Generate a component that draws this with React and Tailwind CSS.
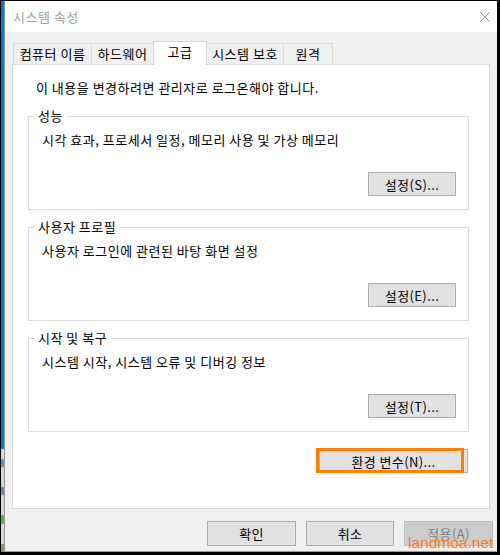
import React from 'react';

const font = { fontFamily: '"Noto Sans CJK KR", "Noto Sans", sans-serif' };

const Btn = ({ children, disabled, className = '' }) => (
  <button
    className={`h-[24px] text-[13px] tracking-[0.4px] leading-none border ${
      disabled
        ? 'bg-[#cccccc] border-[#bfbfbf] text-[#838383]'
        : 'bg-[#e1e1e1] border-[#adadad] text-black'
    } ${className}`}
  >
    {children}
  </button>
);

const Group = ({ title, text, button, className = '' }) => (
  <fieldset className={`ml-[15px] w-[441px] border border-[#dcdcdc] ${className}`}>
    <legend className="ml-[5px] px-[4px] h-[16px] leading-[16px]">{title}</legend>
    <div className="pt-[8px] pl-[13px] pr-[12px] pb-[13px] flex flex-col">
      <p className="h-[16px] leading-[16px]">{text}</p>
      <Btn className="mt-[24px] w-[88px] self-end">{button}</Btn>
    </div>
  </fieldset>
);

const tabs = [
  { label: '컴퓨터 이름', w: 'w-[79px]' },
  { label: '하드웨어', w: 'w-[63px]' },
  { label: '고급', w: 'w-[54px]', active: true },
  { label: '시스템 보호', w: 'w-[78px]' },
  { label: '원격', w: 'w-[50px]' },
];

export default function App() {
  return (
    <div
      className="relative w-[500px] h-[555px] bg-black pt-px pb-[3px] pl-px pr-[3px] flex text-black text-[13px] tracking-[0.5px]"
      style={font}
    >
      {/* desktop strip on the left */}
      <div className="w-[3px] flex flex-col">
        <div className="h-[452px] bg-[#0078d7]"></div>
        <div className="flex-1 bg-[#d8d8d8] flex flex-col gap-[20px] pt-[10px]">
          <div className="h-[8px] bg-[#7d8ea8]"></div>
          <div className="h-[8px] bg-[#6d87b4]"></div>
          <div className="h-[9px] bg-[#3cc43c]"></div>
          <div className="h-[8px] bg-[#a08a6a]"></div>
        </div>
      </div>

      {/* window */}
      <div className="flex-1 flex flex-col border-l border-b border-[#9a9a9a]">
        <div className="h-[31px] bg-white flex items-center justify-between pl-[8px] pr-[6px]">
          <span className="text-[#a0a0a0]">시스템 속성</span>
          <svg width="12" height="12" viewBox="0 0 12 12">
            <path d="M1 1 L11 11 M11 1 L1 11" stroke="#9a9a9a" strokeWidth="1" />
          </svg>
        </div>

        <div className="flex-1 bg-[#f0f0f0] pt-[9px] flex flex-col">
          {/* tabs */}
          <div className="flex items-end ml-[8px]">
            {tabs.map((t, i) => (
              <div
                key={t.label}
                className={`${t.w} ${i > 0 ? '-ml-px' : ''} border border-b-0 border-[#d9d9d9] flex items-center justify-center ${
                  t.active ? 'h-[24px] -mb-px bg-white relative z-10 pb-[3px]' : 'h-[21px] bg-[#f0f0f0]'
                }`}
              >
                {t.label}
              </div>
            ))}
          </div>

          {/* panel */}
          <div className="ml-[7px] w-[478px] h-[445px] bg-white border border-[#d9d9d9] flex flex-col pt-[15px]">
            <p className="ml-[23px] h-[16px] leading-[16px]">
              이 내용을 변경하려면 관리자로 로그온해야 합니다.
            </p>
            <Group className="mt-[12px]" title="성능" text="시각 효과, 프로세서 일정, 메모리 사용 및 가상 메모리" button="설정(S)..." />
            <Group className="mt-[9px]" title="사용자 프로필" text="사용자 로그인에 관련된 바탕 화면 설정" button="설정(E)..." />
            <Group className="mt-[9px]" title="시작 및 복구" text="시스템 시작, 시스템 오류 및 디버깅 정보" button="설정(T)..." />
            <div className="relative self-end mt-[17px] mr-[21px]">
              <Btn className="w-[149px]">환경 변수(N)...</Btn>
              <div className="absolute left-[-3px] top-[-1px] w-[148px] h-[25px] border-[3px] border-[#ff7f00]"></div>
            </div>
          </div>

          {/* dialog buttons */}
          <div className="flex justify-end gap-[10px] mt-[12px] pr-[4px]">
            <Btn className="w-[89px] h-[25px]">확인</Btn>
            <Btn className="w-[88px] h-[25px]">취소</Btn>
            <Btn disabled className="w-[89px] h-[25px]">적용(A)</Btn>
          </div>
        </div>
      </div>

      <span
        className="absolute left-[408px] top-[534px] text-[15.5px] leading-[18px] tracking-normal text-[#ff7a1a]"
        style={{ fontFamily: '"Liberation Sans", sans-serif' }}
      >
        landmoa.net
      </span>
    </div>
  );
}
